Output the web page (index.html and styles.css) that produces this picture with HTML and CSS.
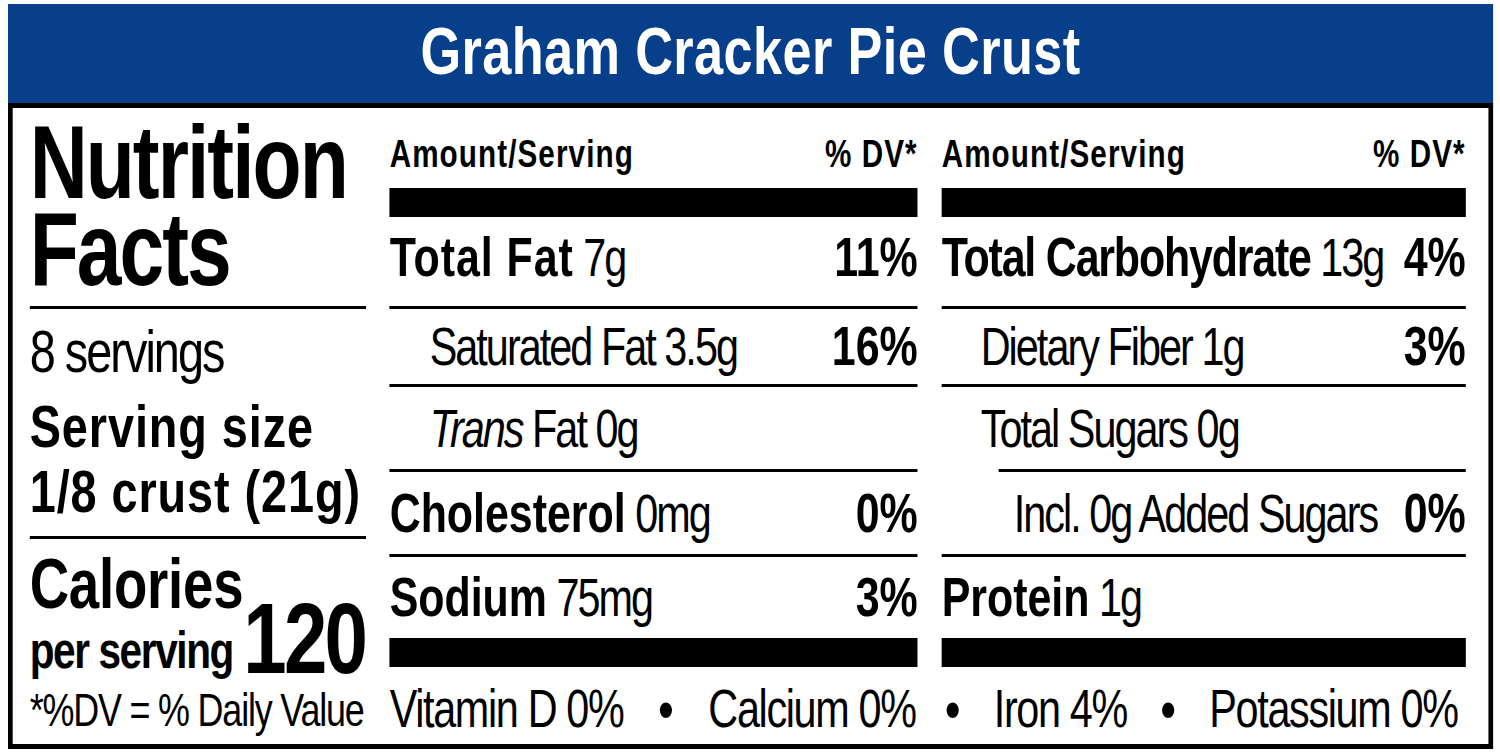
FILE: index.html
```html
<!DOCTYPE html>
<html lang="en">
<head>
<meta charset="utf-8">
<title>Graham Cracker Pie Crust – Nutrition Facts</title>
<link rel="stylesheet" href="styles.css">
</head>
<body>
<div class="page">
<div class="label">
  <header class="product">Graham Cracker Pie Crust</header>
  <section class="panel">
    <div class="col col-left">
      <h1 class="nf-title">Nutrition<br>Facts</h1>
      <div class="servings">
        <p class="serv-count">8 servings</p>
        <p class="serv-size">Serving size<br>1/8 crust (21g)</p>
      </div>
      <div class="calories">
        <div class="cal-row">
          <div class="cal-label">
            <span class="cal-big">Calories</span>
            <span class="cal-small">per serving</span>
          </div>
          <span class="cal-num">120</span>
        </div>
        <p class="dv-note">*%DV = % Daily Value</p>
      </div>
    </div>

    <div class="col col-mid">
      <div class="head"><span>Amount/Serving</span><span>% DV*</span></div>
      <div class="bar"></div>
      <div class="row r-first"><span class="nut"><b class="wide">Total Fat</b> 7g</span><b class="pct">11%</b></div>
      <div class="row r-sat"><span class="nut ind1">Saturated Fat 3.5g</span><b class="pct">16%</b></div>
      <div class="row r-mid"><span class="nut ind1"><i>Trans</i> Fat 0g</span></div>
      <div class="row r-mid"><span class="nut"><b>Cholesterol</b> 0mg</span><b class="pct">0%</b></div>
      <div class="row r-last"><span class="nut"><b>Sodium</b> 75mg</span><b class="pct">3%</b></div>
      <div class="bar"></div>
      <div class="vits vits-mid"><span>Vitamin D 0%</span><span class="dot">•</span><span>Calcium 0%</span></div>
    </div>

    <div class="col col-right">
      <div class="head"><span>Amount/Serving</span><span>% DV*</span></div>
      <div class="bar"></div>
      <div class="row r-first"><span class="nut"><b class="tight">Total Carbohydrate</b> 13g</span><b class="pct">4%</b></div>
      <div class="row r-sat"><span class="nut ind1">Dietary Fiber 1g</span><b class="pct">3%</b></div>
      <div class="row r-mid sub-rule"><span class="nut ind1">Total Sugars 0g</span></div>
      <div class="row r-mid"><span class="nut ind2">Incl. 0g Added Sugars</span><b class="pct">0%</b></div>
      <div class="row r-last"><span class="nut"><b>Protein</b> 1g</span></div>
      <div class="bar"></div>
      <div class="vits vits-right"><span class="dot">•</span><span>Iron 4%</span><span class="dot">•</span><span>Potassium 0%</span></div>
    </div>
  </section>
</div>
</div>
</body>
</html>
```

FILE: styles.css
```css
* {
  box-sizing: border-box;
}

html, body {
  margin: 0;
  padding: 0;
  background: #ffffff;
  overflow: hidden;
}

body {
  font-family: "Liberation Sans", Arial, sans-serif;
  color: #000;
}

.page {
  width: 1500px;
  height: 756px;
  overflow: hidden;
  padding: 4px 0 0 8px;
}

/* The label is set in a condensed face; Liberation Sans is laid out
   wide and compressed horizontally by --k. Horizontal sizes are
   written as target / --k. */
.label {
  --k: 0.78;
  width: calc(1485px / var(--k));
  transform: scaleX(var(--k));
  transform-origin: 0 0;
}

.product {
  height: 99px;
  background: #073f8a;
  color: #fff;
  display: flex;
  align-items: center;
  justify-content: center;
  font-size: 67px;
  font-weight: 700;
  letter-spacing: 0.5px;
  line-height: 1;
  padding-bottom: 7px;
}

.panel {
  border-style: solid;
  border-color: #000;
  border-width: 5px calc(5px / var(--k));
  height: 646px;
  padding: 0 calc(22px / var(--k)) 0 calc(17px / var(--k));
  display: grid;
  grid-template-columns: calc(336px / var(--k)) calc(528px / var(--k)) calc(524px / var(--k));
  column-gap: calc(24px / var(--k));
}

.col {
  display: flex;
  flex-direction: column;
  min-width: 0;
}

/* ---------- left column ---------- */
.nf-title {
  margin: 0;
  height: 201px;
  padding-top: 11px;
  border-bottom: 3px solid #000;
  font-size: 103px;
  line-height: 87px;
  font-weight: 700;
  letter-spacing: -2.5px;
}

.servings {
  height: 230px;
  padding-top: 13px;
  border-bottom: 3px solid #000;
}

.serv-count {
  margin: 0;
  font-size: 60px;
  line-height: 60px;
  letter-spacing: -2.5px;
}

.serv-size {
  margin: 12px 0 0;
  font-size: 60px;
  line-height: 65px;
  font-weight: 700;
  letter-spacing: 1.2px;
  white-space: nowrap;
}

.calories {
  height: 205px;
  padding-top: 15px;
}

.cal-row {
  display: flex;
  justify-content: space-between;
  align-items: flex-end;
}

.cal-label {
  display: flex;
  flex-direction: column;
  font-weight: 700;
  white-space: nowrap;
}

.cal-big {
  font-size: 70px;
  line-height: 60px;
  letter-spacing: -0.3px;
}

.cal-small {
  font-size: 52px;
  line-height: 72px;
  letter-spacing: -1.8px;
}

.cal-num {
  font-size: 100px;
  line-height: 96px;
  font-weight: 700;
  letter-spacing: -3.5px;
  margin-right: calc(1px / var(--k));
}

.dv-note {
  margin: 0;
  font-size: 46px;
  line-height: 48px;
  letter-spacing: -1.5px;
  white-space: nowrap;
}

/* ---------- nutrient columns ---------- */
.head {
  height: 80px;
  display: flex;
  justify-content: space-between;
  align-items: flex-end;
  padding-bottom: 14px;
  font-size: 38px;
  line-height: 40px;
  font-weight: 700;
  letter-spacing: 1.4px;
}

.bar {
  height: 29px;
  background: #000;
  flex: none;
}

.row {
  display: flex;
  justify-content: space-between;
  align-items: center;
  border-bottom: 3px solid #000;
  line-height: 1;
  flex: none;
  white-space: nowrap;
}

.r-first {
  height: 92px;
  padding-bottom: 9px;
}

.r-sat {
  height: 78px;
}

.r-mid {
  height: 85px;
}

.r-last {
  height: 81px;
  border-bottom: 0;
}

.sub-rule {
  border-bottom: 0;
  padding-bottom: 3px;
  background: linear-gradient(#000, #000) no-repeat;
  background-position: left calc(57px / var(--k)) bottom;
  background-size: calc(100% - 57px / var(--k)) 3px;
}

.nut {
  font-size: 53px;
  letter-spacing: -2.5px;
}

.nut b {
  font-size: 55px;
  letter-spacing: 0;
}

.nut b.wide {
  letter-spacing: 1.2px;
}

.nut b.tight {
  letter-spacing: -1.5px;
}

.nut i {
  font-style: italic;
}

.ind1 {
  padding-left: calc(40px / var(--k));
}

.col-right .ind1 {
  padding-left: calc(39px / var(--k));
}

.ind2 {
  padding-left: calc(72px / var(--k));
}

.pct {
  font-size: 55px;
  font-weight: 700;
  letter-spacing: 0;
}

.vits {
  height: 77px;
  display: flex;
  justify-content: space-between;
  align-items: center;
  padding-top: 6px;
  font-size: 53px;
  line-height: 1;
  letter-spacing: -1.7px;
  white-space: nowrap;
}

.vits-mid {
  padding-right: calc(2px / var(--k));
}

.vits-right {
  padding-left: calc(3px / var(--k));
  padding-right: calc(8px / var(--k));
}

.dot {
  letter-spacing: 0;
  font-size: 58px;
}
```
